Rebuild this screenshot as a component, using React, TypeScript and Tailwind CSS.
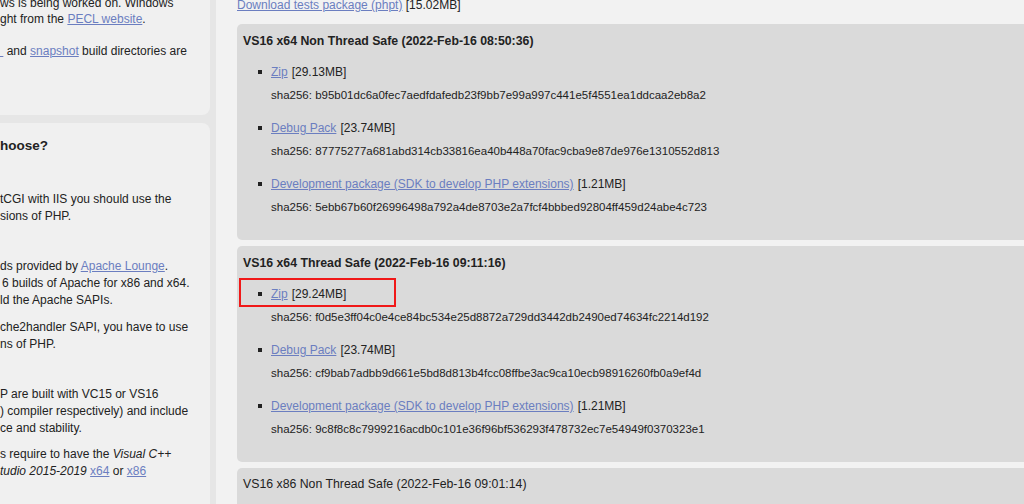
import React from "react";

const font = { fontFamily: '"Liberation Sans", Arial, sans-serif' };

type Build = {
  title: string;
  bold: boolean;
  zip: string;
  zipSha: string;
  debugSha: string;
  devSha: string;
  highlight?: boolean;
};

const builds: Build[] = [
  {
    title: "VS16 x64 Non Thread Safe (2022-Feb-16 08:50:36)",
    bold: true,
    zip: "29.13MB",
    zipSha: "b95b01dc6a0fec7aedfdafedb23f9bb7e99a997c441e5f4551ea1ddcaa2eb8a2",
    debugSha: "87775277a681abd314cb33816ea40b448a70fac9cba9e87de976e1310552d813",
    devSha: "5ebb67b60f26996498a792a4de8703e2a7fcf4bbbed92804ff459d24abe4c723",
  },
  {
    title: "VS16 x64 Thread Safe (2022-Feb-16 09:11:16)",
    bold: true,
    zip: "29.24MB",
    zipSha: "f0d5e3ff04c0e4ce84bc534e25d8872a729dd3442db2490ed74634fc2214d192",
    debugSha: "cf9bab7adbb9d661e5bd8d813b4fcc08ffbe3ac9ca10ecb98916260fb0a9ef4d",
    devSha: "9c8f8c8c7999216acdb0c101e36f96bf536293f478732ec7e54949f0370323e1",
    highlight: true,
  },
];

function Link({ children }: { children: React.ReactNode }) {
  return <a className="text-[#6b7ec0] underline cursor-pointer">{children}</a>;
}

function Item({ label, size, first }: { label: string; size: string; first?: boolean }) {
  return (
    <li className={`flex items-center pl-[21px] leading-[16px] text-[12px] ${first ? "mt-[15px]" : "mt-[17px]"}`}>
      <span className="w-[4px] h-[4px] bg-[#222] mr-[9px] shrink-0" />
      <Link>{label}</Link>
      <span className="ml-[4px]">[{size}]</span>
    </li>
  );
}

function Sha({ value }: { value: string }) {
  return (
    <div className="pl-[34px] mt-[7px] leading-[16px] text-[11.5px] whitespace-nowrap">
      sha256: {value}
    </div>
  );
}

function BuildCard({ b }: { b: Build }) {
  return (
    <div className="relative bg-[#dadada] rounded-[5px] pt-[9px] pb-[25px] px-[6px]">
      {b.highlight && (
        <span className="absolute left-[2px] top-[32px] w-[157px] h-[29px] border-2 border-[#f01818]" />
      )}
      <div className={`leading-[16px] text-[12.3px] ${b.bold ? "font-bold" : ""}`}>{b.title}</div>
      <ul className="-ml-[6px]">
        <Item label="Zip" size={b.zip} first />
        <Sha value={b.zipSha} />
        <Item label="Debug Pack" size="23.74MB" />
        <Sha value={b.debugSha} />
        <Item label="Development package (SDK to develop PHP extensions)" size="1.21MB" />
        <Sha value={b.devSha} />
      </ul>
    </div>
  );
}

function Line({ children, className = "" }: { children: React.ReactNode; className?: string }) {
  return <div className={`whitespace-nowrap leading-[17px] ${className}`}>{children}</div>;
}

export default function App() {
  return (
    <div className="w-[1024px] h-[504px] overflow-hidden bg-[#f2f2f2] text-[#222] flex" style={font}>
      {/* Sidebar */}
      <aside className="w-[216px] shrink-0 bg-[#e6e6e6] pr-[6px] flex flex-col gap-[8px] text-[12px]">
        <div className="bg-[#f0f0f0] rounded-br-[8px] pb-[56px] -mt-[5px]">
          <div className="leading-[16px] whitespace-nowrap">ws is being worked on. Windows</div>
          <div className="leading-[16px] whitespace-nowrap">
            ght from the <Link>PECL website</Link>.
          </div>
          <div className="leading-[16px] whitespace-nowrap mt-[16px]">
            <Link>&nbsp;</Link> and <Link>snapshot</Link> build directories are
          </div>
        </div>
        <div className="flex-1 bg-[#f0f0f0] rounded-tr-[8px] pt-[13px]">
          <div className="text-[13.5px] font-bold leading-[20px]">hoose?</div>
          <Line className="mt-[35px]">tCGI with IIS you should use the</Line>
          <Line>sions of PHP.</Line>
          <Line className="mt-[33px]">
            ds provided by <Link>Apache Lounge</Link>.
          </Line>
          <Line className="pl-[2px]">6 builds of Apache for x86 and x64.</Line>
          <Line>ld the Apache SAPIs.</Line>
          <Line className="mt-[10px]">che2handler SAPI, you have to use</Line>
          <Line>ns of PHP.</Line>
          <Line className="mt-[33px]">P are built with VC15 or VS16</Line>
          <Line>) compiler respectively) and include</Line>
          <Line>ce and stability.</Line>
          <Line className="mt-[9px]">
            s require to have the <i>Visual C++</i>
          </Line>
          <Line>
            <i>tudio 2015-2019</i> <Link>x64</Link> or <Link>x86</Link>
          </Line>
        </div>
      </aside>

      {/* Main */}
      <main className="flex-1 ml-[21px] -mr-[12px] flex flex-col">
        <div className="-mt-[3px] leading-[16px] text-[12px] whitespace-nowrap">
          <Link>Download tests package (phpt)</Link> [15.02MB]
        </div>
        <div className="mt-[11px] flex flex-col gap-[6px]">
          {builds.map((b) => (
            <BuildCard key={b.title} b={b} />
          ))}
          <div className="bg-[#dadada] rounded-[5px] pt-[8px] pb-[40px] px-[6px]">
            <div className="leading-[16px] text-[12.3px]">VS16 x86 Non Thread Safe (2022-Feb-16 09:01:14)</div>
          </div>
        </div>
      </main>
    </div>
  );
}
